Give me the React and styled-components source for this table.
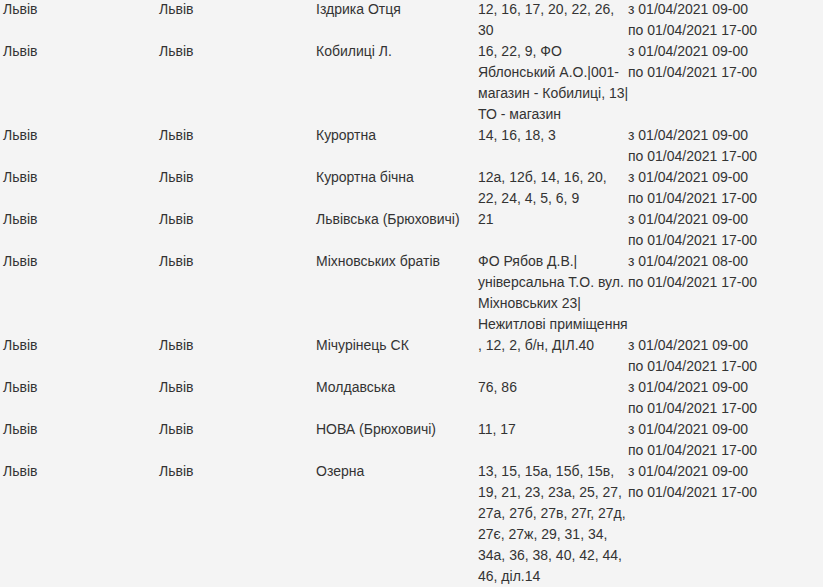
import React from "react";
import styled, { createGlobalStyle } from "styled-components";

const Global = createGlobalStyle`
  html, body {
    margin: 0;
    padding: 0;
    background: #f4f4f4;
  }
`;

const Table = styled.div`
  margin-top: -1px;
  padding: 0 0 0 3px;
  font-family: "Liberation Sans", Arial, sans-serif;
  font-size: 14px;
  line-height: 21px;
  color: #333;
`;

const Row = styled.div`
  display: grid;
  grid-template-columns: 156px 157px 162px 150px 1fr;
`;

const Cell = styled.div`
  min-width: 0;
`;

const Houses = styled.div`
  min-width: 0;
  margin-right: -1px;
`;

const Period = styled.div`
  white-space: nowrap;
`;

const rows = [
  ["Іздрика Отця", "12, 16, 17, 20, 22, 26, 30", "09-00"],
  ["Кобилиці Л.", "16, 22, 9, ФО Яблонський А.О.|001-магазин - Кобилиці, 13| ТО - магазин", "09-00"],
  ["Курортна", "14, 16, 18, 3", "09-00"],
  ["Курортна бічна", "12а, 12б, 14, 16, 20, 22, 24, 4, 5, 6, 9", "09-00"],
  ["Львівська (Брюховичі)", "21", "09-00"],
  ["Міхновських братів", "ФО Рябов Д.В.| універсальна Т.О. вул. Міхновських 23| Нежитлові приміщення", "08-00"],
  ["Мічурінець СК", ", 12, 2, б/н, ДІЛ.40", "09-00"],
  ["Молдавська", "76, 86", "09-00"],
  ["НОВА (Брюховичі)", "11, 17", "09-00"],
  [
    "Озерна",
    "13, 15, 15а, 15б, 15в, 19, 21, 23, 23а, 25, 27, 27а, 27б, 27в, 27г, 27д, 27є, 27ж, 29, 31, 34, 34а, 36, 38, 40, 42, 44, 46, діл.14",
    "09-00",
  ],
];

export default function App() {
  return (
    <>
      <Global />
      <Table>
        {rows.map(([street, houses, start], i) => (
          <Row key={i}>
            <Cell>Львів</Cell>
            <Cell>Львів</Cell>
            <Cell>{street}</Cell>
            <Houses>{houses}</Houses>
            <Cell>
              <Period>з 01/04/2021 {start}</Period>
              <Period>по 01/04/2021 17-00</Period>
            </Cell>
          </Row>
        ))}
      </Table>
    </>
  );
}
